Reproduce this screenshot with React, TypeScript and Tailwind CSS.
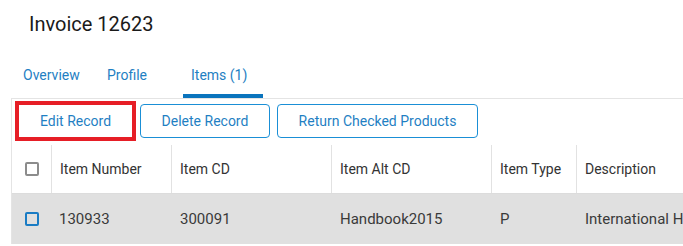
import React from "react";

const columns = ["Item Number", "Item CD", "Item Alt CD", "Item Type", "Description"];
const row = ["130933", "300091", "Handbook2015", "P", "International Handbook"];

export default function App() {
  return (
    <div className="w-[683px] h-[246px] overflow-hidden bg-white font-['Roboto',sans-serif] text-[#333]">
      <h1 className="pl-[29px] pt-[12px] h-[56px] text-[20px] leading-[24px] text-[#1a1a1a]">
        Invoice 12623
      </h1>

      {/* tabs */}
      <div className="flex pl-[15px] h-[42px] text-[14px] text-[#1f7fc3]">
        <div className="w-[84px] pl-2 pt-[9px]">Overview</div>
        <div className="w-[84px] pl-2 pt-[9px]">Profile</div>
        <div className="w-[80px] pl-2 pt-[9px] border-b-4 border-[#0a74bd]">Items (1)</div>
      </div>

      <div className="ml-[11px] border-l border-t border-[#e4e4e4]">
        {/* actions */}
        <div className="flex items-center pt-[2px] h-[42px] text-[14px] text-[#1f7fc3]">
          <button
            type="button"
            className="ml-[3px] w-[121px] h-[40px] border-4 border-[#e61e26] flex items-center justify-center"
          >
            Edit Record
          </button>
          <button
            type="button"
            className="ml-[4px] w-[130px] h-[34px] border border-[#1a8fd6] rounded-[4px] flex items-center justify-center"
          >
            Delete Record
          </button>
          <button
            type="button"
            className="ml-[7px] w-[201px] h-[34px] border border-[#1a8fd6] rounded-[4px] flex items-center justify-center"
          >
            Return Checked Products
          </button>
        </div>

        {/* table */}
        <div className="mt-[4px] text-[14px]">
          <div className="grid grid-cols-[39px_120px_160px_160px_85px_1fr] h-[49px] border-b border-[#dcdcdc]">
            <div className="flex items-center pl-[13px]">
              <span className="w-[14px] h-[14px] border-2 border-[#8c8c8c] rounded-[2px]" />
            </div>
            {columns.map((c) => (
              <div key={c} className="flex items-center pl-2 border-l border-[#e2e2e2] whitespace-nowrap">
                {c}
              </div>
            ))}
          </div>
          <div className="grid grid-cols-[39px_120px_160px_160px_85px_1fr] h-[50px] bg-[#e0e0e0] text-[15px] text-[#3a3a3a]">
            <div className="flex items-center pl-[13px]">
              <span className="w-[14px] h-[14px] border-2 border-[#1a7cc4] rounded-[2px]" />
            </div>
            {row.map((v, i) => (
              <div key={i} className={`flex items-center whitespace-nowrap overflow-hidden ${i === 0 ? "pl-2" : "pl-[9px]"}`}>
                {v}
              </div>
            ))}
          </div>
        </div>
      </div>
    </div>
  );
}
